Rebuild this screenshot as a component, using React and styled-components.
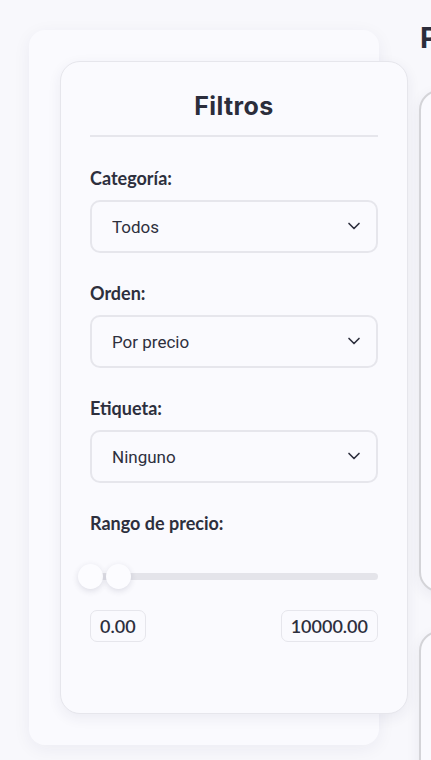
import styled, {createGlobalStyle} from "styled-components";
import {ChevronDown} from "lucide-react";


const GlobalStyle = createGlobalStyle`
    html, body {
        margin: 0;
        padding: 0;
        background: #f8f8fc;
        overflow: hidden;
        font-family: "Lato", "Liberation Sans", sans-serif;
        color: #2d2f3d;
    }
    * {
        box-sizing: border-box;
    }
`;


const Page = styled.div`
    display: flex;
    align-items: flex-start;
    gap: 40px;
    padding: 20px 0 0 29px;
    width: 1100px;
`;

const Sidebar = styled.aside`
    flex-shrink: 0;
    width: 350px;
    margin-top: 10px;
    padding: 31px;
    border-radius: 16px;
    background: #fafafe;
    box-shadow: 0 4px 18px rgba(40, 40, 80, 0.06);
`;

const FilterCard = styled.div`
    width: 348px;
    height: 653px;
    padding: 29px 29px 0;
    border: 1px solid #e6e6ec;
    border-radius: 20px;
    background: #fafafe;
    box-shadow: 0 4px 14px rgba(40, 40, 80, 0.07);
`;

const Title = styled.h2`
    margin: 0 0 31px;
    padding-bottom: 14px;
    border-bottom: 2px solid #e6e6ec;
    text-align: center;
    font-family: "Inter", "Liberation Sans", sans-serif;
    font-size: 25px;
    font-weight: 700;
    letter-spacing: 0.4px;
    color: #2b2d3b;
`;

const Field = styled.div`
    margin-bottom: 30px;
`;

const Label = styled.label`
    display: block;
    margin-top: -1px;
    margin-bottom: 11px;
    font-size: 18px;
    line-height: 22px;
    font-weight: 700;
`;

const SelectWrap = styled.div`
    position: relative;
`;

const Select = styled.select`
    appearance: none;
    width: 100%;
    height: 53px;
    padding: 0 40px 0 20px;
    border: 2px solid #e6e6ec;
    border-radius: 10px;
    background: #fafafe;
    font-family: "Roboto", "Liberation Sans", sans-serif;
    font-size: 17px;
    color: #2d2f3d;
    outline: none;
`;

const Chevron = styled(ChevronDown)`
    position: absolute;
    right: 14px;
    top: 16px;
    pointer-events: none;
    color: #2d2f3d;
`;

const Slider = styled.div`
    position: relative;
    height: 24px;
    margin-top: 30px;
    display: flex;
    align-items: center;
`;

const Track = styled.div`
    width: 100%;
    height: 7px;
    border-radius: 4px;
    background: #e4e4ea;
`;

const Thumb = styled.div`
    position: absolute;
    top: 0;
    width: 25px;
    height: 25px;
    margin-left: -12.5px;
    border-radius: 50%;
    background: #fcfcff;
    box-shadow: 0 2px 6px rgba(40, 40, 80, 0.14);
`;

const Values = styled.div`
    display: flex;
    justify-content: space-between;
    margin-top: 22px;
`;

const Value = styled.span`
    display: inline-flex;
    align-items: center;
    height: 32px;
    padding: 0 9px;
    border: 1px solid #e6e6ec;
    border-radius: 7px;
    font-size: 18px;
    font-weight: 600;
`;

const Main = styled.main`
    flex-shrink: 0;
    width: 640px;
`;

const Heading = styled.h1`
    margin: 0 0 35px 1px;
    font-family: "Inter", "Liberation Sans", sans-serif;
    font-size: 29px;
    line-height: 35px;
    font-weight: 700;
    color: #2b2d3b;
`;

const ProductCard = styled.div`
    height: 502px;
    margin-bottom: 39px;
    border: 2px solid #d4d4d8;
    border-radius: 20px;
    background: #fafafe;
    box-shadow: 0 4px 14px rgba(40, 40, 80, 0.07);
`;


const filters = [
    {id: "categoria", label: "Categoría:", options: ["Todos", "Ropa", "Accesorios"]},
    {id: "orden", label: "Orden:", options: ["Por precio", "Por nombre"]},
    {id: "etiqueta", label: "Etiqueta:", options: ["Ninguno", "Nuevo", "Oferta"]},
];


function App() {
    const min = 0;
    const max = 10000;
    const thumbs = [0, 10];

    return (
        <>
            <GlobalStyle/>
            <Page>
                <Sidebar>
                    <FilterCard>
                        <Title>Filtros</Title>
                        {filters.map(({id, label, options}) => (
                            <Field key={id}>
                                <Label htmlFor={id}>{label}</Label>
                                <SelectWrap>
                                    <Select id={id} defaultValue={options[0]}>
                                        {options.map((o) => <option key={o}>{o}</option>)}
                                    </Select>
                                    <Chevron size={20} strokeWidth={2}/>
                                </SelectWrap>
                            </Field>
                        ))}
                        <Label>Rango de precio:</Label>
                        <Slider>
                            <Track/>
                            {thumbs.map((pct, i) => (
                                <Thumb key={i} style={{left: `${pct}%`}}/>
                            ))}
                        </Slider>
                        <Values>
                            <Value>{min.toFixed(2)}</Value>
                            <Value>{max.toFixed(2)}</Value>
                        </Values>
                    </FilterCard>
                </Sidebar>
                <Main>
                    <Heading>Productos</Heading>
                    <ProductCard/>
                    <ProductCard/>
                </Main>
            </Page>
        </>
    );
}

export default App;
